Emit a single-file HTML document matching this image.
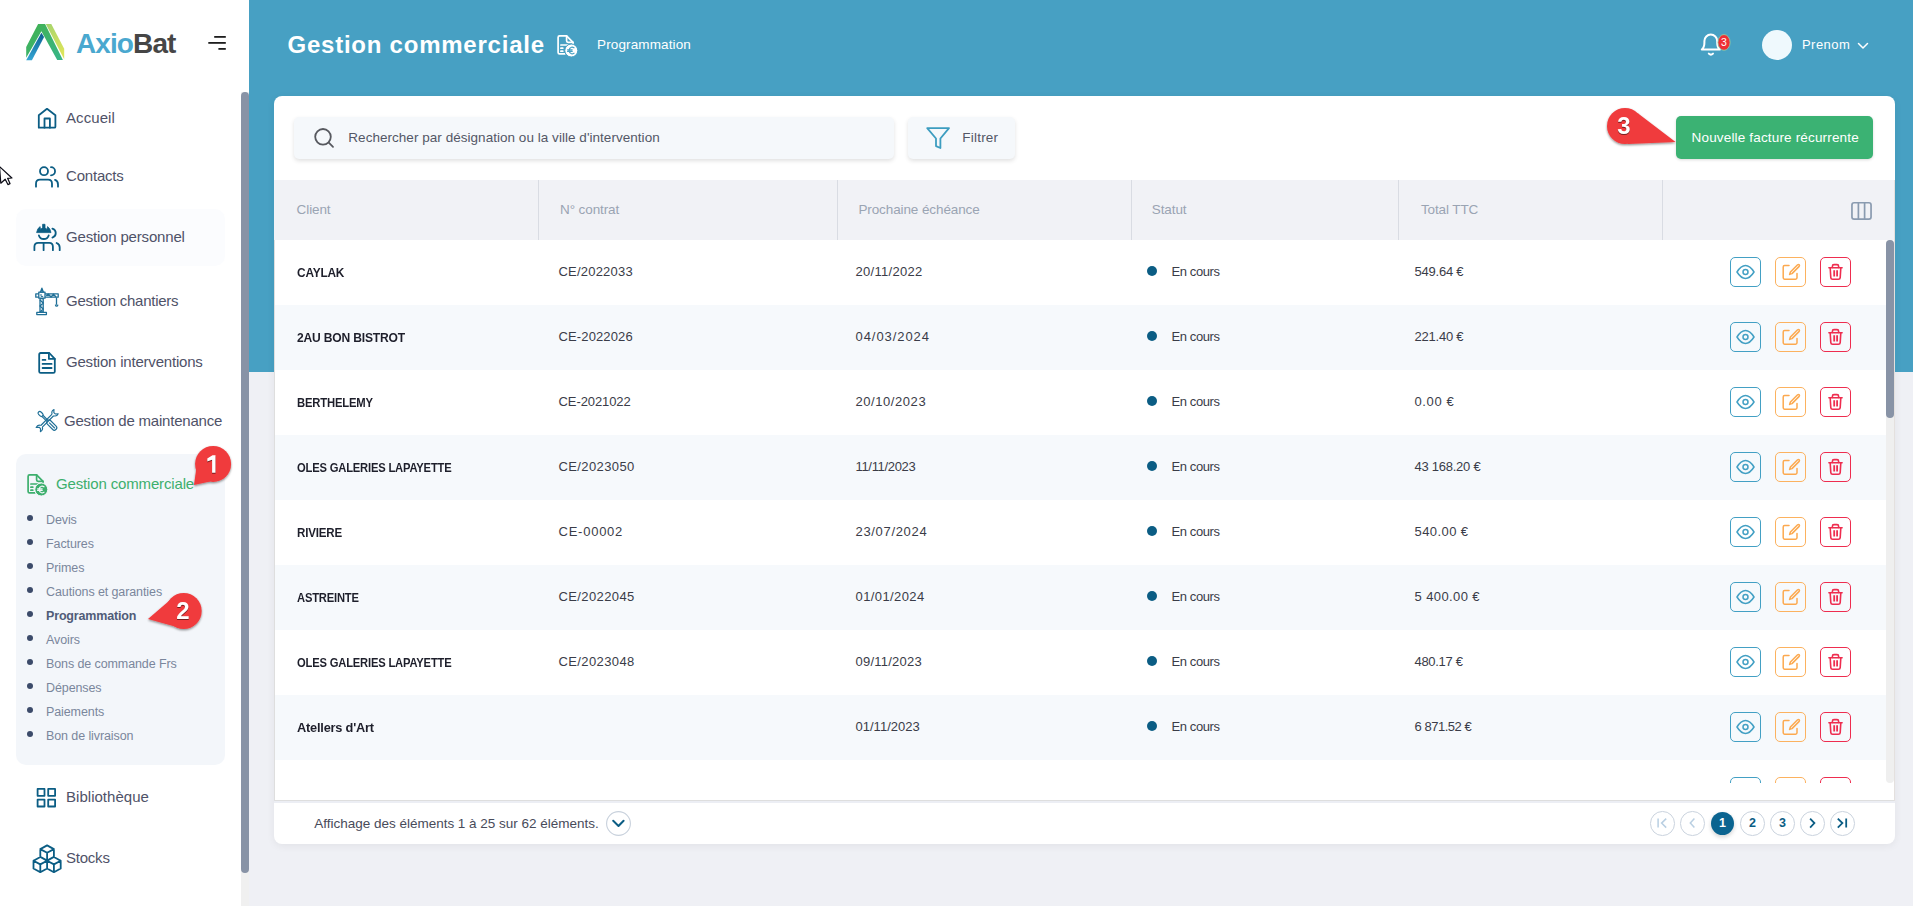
<!DOCTYPE html>
<html><head><meta charset="utf-8">
<style>
*{box-sizing:border-box;margin:0;padding:0}
html,body{width:1913px;height:906px;overflow:hidden;background:#eff0f5;font-family:"Liberation Sans",sans-serif;position:relative}
.abs{position:absolute}
svg{overflow:visible}
#side{position:absolute;left:0;top:0;width:249px;height:906px;background:#fff}
#strack{position:absolute;left:241px;top:92px;width:8px;height:814px;background:#f0f0f0}
#sthumb{position:absolute;left:241px;top:92px;width:8px;height:781px;background:#8893a6;border-radius:4px}
.dot{position:absolute;left:27px;width:6px;height:6px;border-radius:50%;background:#3c4b6a}
#band{position:absolute;left:249px;top:0;width:1664px;height:372px;background:#47a0c3}
#card{position:absolute;left:274px;top:96px;width:1621px;height:748px;background:#fff;border-radius:8px;box-shadow:0 2px 8px rgba(0,0,0,.06)}
.t{position:absolute;white-space:nowrap;line-height:1}
</style></head><body>
<div id="side"><svg class="abs" style="left:20px;top:20px;" width="50" height="45" viewBox="0 0 50 45">
<defs>
<linearGradient id="gb" x1="0" y1="1" x2="0" y2="0"><stop offset="0" stop-color="#35a6d4"/><stop offset="1" stop-color="#0d5f91"/></linearGradient>
<linearGradient id="gy" x1="0" y1="0" x2="0.3" y2="1"><stop offset="0" stop-color="#a6d46e"/><stop offset="1" stop-color="#dbe45a"/></linearGradient>
<linearGradient id="gg" x1="0" y1="0" x2="1" y2="1"><stop offset="0" stop-color="#42b14e"/><stop offset="1" stop-color="#37b58a"/></linearGradient>
</defs>
<polygon points="18.1,4 25.1,4 42.9,40 37.2,40 21.4,11.2 6.2,37.7 6.2,27" fill="url(#gg)"/>
<polygon points="21.4,12.7 24.1,17.1 11.9,40.2 6.2,40.2" fill="url(#gb)"/>
<polygon points="25.8,4 31.3,4 44.2,28.8 44.2,39.2" fill="url(#gy)"/>
</svg>
<div class="t" style="left:76px;top:30.00px;font-size:28px;color:#464646;font-weight:700;letter-spacing:-0.9px;"><span style="color:#4aa8cf">Axio</span><span style="color:#464646">Bat</span></div>
<svg class="abs" style="left:205px;top:30px;" width="25" height="25" viewBox="0 0 25 25"><g stroke="#1e1e1e" stroke-width="1.8"><line x1="9.2" y1="6.9" x2="20.8" y2="6.9"/><line x1="3.3" y1="12.9" x2="20.8" y2="12.9"/><line x1="13.4" y1="18.9" x2="20.8" y2="18.9"/></g></svg>
<div class="abs" style="left:16px;top:209px;width:209px;height:57px;background:#fbfcfe;border-radius:10px"></div><div class="abs" style="left:16px;top:454px;width:209px;height:311px;background:#f3f6fa;border-radius:10px"></div><svg class="abs" style="left:30px;top:100px;" width="35" height="35" viewBox="0 0 35 35"><g fill="none" stroke="#0b5d84" stroke-width="1.8" stroke-linecap="round" stroke-linejoin="round"><path d="M8.8 27.7V15.2L17 8.8L25.4 15.2V26.7Q25.4 27.7 24.4 27.7H9.8Q8.8 27.7 8.8 26.7Z"/><path d="M14.5 27.7V18.5H19.9V27.7"/></g></svg>
<div class="t" style="left:66px;top:110.10px;font-size:15px;color:#4f5268;font-weight:400;letter-spacing:0.073px;">Accueil</div>
<svg class="abs" style="left:30px;top:160px;" width="35" height="35" viewBox="0 0 35 35"><g fill="none" stroke="#0b5d84" stroke-width="1.8" stroke-linecap="round" stroke-linejoin="round"><circle cx="14" cy="11.2" r="4"/><path d="M21 7.2A4 4 0 0 1 21 15.3"/><path d="M6 26.7V23.7Q6 19.7 10 19.7H18Q22 19.7 22 23.7V26.7"/><path d="M25 19.9Q28 20.9 28 24.4V26.7"/></g></svg>
<div class="t" style="left:66px;top:168.10px;font-size:15px;color:#4f5268;font-weight:400;letter-spacing:-0.200px;">Contacts</div>
<svg class="abs" style="left:28px;top:218px;" width="40" height="40" viewBox="0 0 40 40"><g fill="none" stroke="#0b5d84" stroke-width="1.8" stroke-linecap="round" stroke-linejoin="round" stroke-width="2"><path d="M10.9 17.4Q12 21 15.8 21Q19.6 21 20.7 17.4"/><path d="M24.4 10.6A4.7 4.7 0 0 1 24.4 19.6"/><path d="M6.4 32.2V28.7Q6.4 24.9 10.2 24.9H21.3Q24.9 24.9 24.9 28.7V32.2"/><path d="M15.6 25V32.2"/><path d="M28.6 25Q31.7 26.2 31.7 29.5V32.2"/></g>
<path d="M8.6 14.6Q9.3 10.5 12 8.6L12.6 11.6L14.6 9.5V6.3H17V9.5L19 11.6L19.6 8.6Q22.3 10.5 23 14.6Z" fill="#0b5d84" stroke="#0b5d84" stroke-width="0.8" stroke-linejoin="round"/></svg>
<div class="t" style="left:66px;top:229.10px;font-size:15px;color:#4f5268;font-weight:400;letter-spacing:-0.178px;">Gestion personnel</div>
<svg class="abs" style="left:30px;top:283px;" width="35" height="35" viewBox="0 0 35 35"><g fill="none" stroke="#1f6f97" stroke-width="1.3" stroke-linejoin="round">
<rect x="5.8" y="10.8" width="22.4" height="3.4"/>
<path d="M16 12.5L18.5 11.2L21 14L23.5 11.2L26 14"/>
<rect x="8.8" y="9.2" width="6.2" height="6" fill="#fff"/>
<path d="M10.4 9.2L11.9 5.2L13.4 9.2Z"/>
<rect x="10" y="15.6" width="3.2" height="13.4"/>
<path d="M10 17L13.2 20L10 23L13.2 26L10 29"/>
<rect x="6.8" y="29.4" width="9.6" height="2.2"/>
<path d="M26.5 14.4V21.8"/><path d="M25.4 21.6Q25.6 23.2 26.8 23.2Q28 23 27.6 21.6"/>
</g><path d="M11 11V13.4H13.2" fill="none" stroke="#1f6f97" stroke-width="1"/></svg>
<div class="t" style="left:66px;top:293.30px;font-size:15px;color:#4f5268;font-weight:400;letter-spacing:-0.258px;">Gestion chantiers</div>
<svg class="abs" style="left:30px;top:345px;" width="35" height="35" viewBox="0 0 35 35"><g fill="none" stroke="#0b5d84" stroke-width="1.8" stroke-linecap="round" stroke-linejoin="round" stroke-width="1.9"><path d="M10.7 8H19.3L24.8 13.8V26.4Q24.8 27.9 23.3 27.9H10.7Q9.2 27.9 9.2 26.4V9.5Q9.2 8 10.7 8Z"/><path d="M18.9 8V13.9H24.8"/><path d="M12.6 14.9H15.4M12.6 18.9H21.6M12.6 23H21.6"/></g></svg>
<div class="t" style="left:66px;top:354.20px;font-size:15px;color:#4f5268;font-weight:400;letter-spacing:-0.206px;">Gestion interventions</div>
<svg class="abs" style="left:30px;top:403px;" width="35" height="35" viewBox="0 0 35 35"><g fill="none" stroke="#1f6f97" stroke-width="1.15" stroke-linejoin="round">
<g transform="rotate(45 17.2 17.6)">
<rect x="5" y="15.9" width="5.6" height="3.4" rx="1.7"/>
<path d="M10.4 16.8H17.2M10.4 18.4H17.2"/>
<rect x="17.6" y="15.2" width="12" height="4.8" rx="2.2"/>
<path d="M20 17.6H28"/>
</g>
<g transform="rotate(-45 17.2 17.6)">
<path d="M9.2 16.5H25.2M9.2 18.7H25.2"/>
<path d="M9.2 16.5A3.8 3.8 0 0 0 4.6 14.6L6.8 16.6V18.6L4.6 20.6A3.8 3.8 0 0 0 9.2 18.7"/>
<path d="M25.2 16.5A3.8 3.8 0 0 1 29.8 14.6L27.6 16.6V18.6L29.8 20.6A3.8 3.8 0 0 1 25.2 18.7"/>
</g>
</g></svg>
<div class="t" style="left:64px;top:412.80px;font-size:15px;color:#4f5268;font-weight:400;letter-spacing:-0.200px;">Gestion de maintenance</div>
<svg class="abs" style="left:20px;top:468px;" width="35" height="35" viewBox="0 0 35 35"><g fill="none" stroke="#3daf6d" stroke-width="1.7" stroke-linejoin="round" stroke-linecap="round">
<path d="M14.8 24.9H9.6Q8.1 24.9 8.1 23.4V8.4Q8.1 6.9 9.6 6.9H16.6L23 13.3V15.4"/>
<path d="M16.6 6.9V11.8Q16.6 13.3 18.1 13.3H23"/>
<path d="M10.9 16H17.5M10.9 19.2H12.8M10.9 22.2H12.8"/></g>
<circle cx="21.3" cy="21.5" r="6.5" fill="#3daf6d" stroke="#f3f6fa" stroke-width="1"/>
<g fill="none" stroke="#f3f6fa" stroke-width="1.2" stroke-linecap="round"><path d="M24 18.8Q22.6 17.9 21.4 18.3Q19.2 19 19.2 21.5Q19.2 24 21.4 24.7Q22.6 25.1 24 24.2"/><path d="M17.6 20.8H22.2M17.6 22.4H22.2"/></g></svg>
<div class="t" style="left:56px;top:476.00px;font-size:15px;color:#3daf6d;font-weight:400;letter-spacing:-0.149px;">Gestion commerciale</div>
<div class="dot" style="top:515.0px"></div><div class="t" style="left:46px;top:513.82px;font-size:12.5px;color:#7a869c;font-weight:400;letter-spacing:-0.1px;">Devis</div>
<div class="dot" style="top:539.0px"></div><div class="t" style="left:46px;top:537.82px;font-size:12.5px;color:#7a869c;font-weight:400;letter-spacing:-0.1px;">Factures</div>
<div class="dot" style="top:563.0px"></div><div class="t" style="left:46px;top:561.82px;font-size:12.5px;color:#7a869c;font-weight:400;letter-spacing:-0.1px;">Primes</div>
<div class="dot" style="top:587.0px"></div><div class="t" style="left:46px;top:585.82px;font-size:12.5px;color:#7a869c;font-weight:400;letter-spacing:-0.1px;">Cautions et garanties</div>
<div class="dot" style="top:611.0px"></div><div class="t" style="left:46px;top:609.82px;font-size:12.5px;color:#505c78;font-weight:700;letter-spacing:-0.158px;">Programmation</div>
<div class="dot" style="top:635.0px"></div><div class="t" style="left:46px;top:633.82px;font-size:12.5px;color:#7a869c;font-weight:400;letter-spacing:-0.1px;">Avoirs</div>
<div class="dot" style="top:659.0px"></div><div class="t" style="left:46px;top:657.82px;font-size:12.5px;color:#7a869c;font-weight:400;letter-spacing:-0.1px;">Bons de commande Frs</div>
<div class="dot" style="top:683.0px"></div><div class="t" style="left:46px;top:681.82px;font-size:12.5px;color:#7a869c;font-weight:400;letter-spacing:-0.1px;">Dépenses</div>
<div class="dot" style="top:707.0px"></div><div class="t" style="left:46px;top:705.82px;font-size:12.5px;color:#7a869c;font-weight:400;letter-spacing:-0.1px;">Paiements</div>
<div class="dot" style="top:731.0px"></div><div class="t" style="left:46px;top:729.82px;font-size:12.5px;color:#7a869c;font-weight:400;letter-spacing:-0.1px;">Bon de livraison</div>
<svg class="abs" style="left:30px;top:781px;" width="35" height="35" viewBox="0 0 35 35"><g fill="none" stroke="#0b5d84" stroke-width="1.8" stroke-linecap="round" stroke-linejoin="round" stroke-width="1.9" stroke-linecap="butt" stroke-linejoin="miter"><rect x="7.6" y="7.9" width="6.9" height="6.9"/><rect x="18.2" y="7.9" width="6.9" height="6.9"/><rect x="7.6" y="18.6" width="6.9" height="6.9"/><rect x="18.2" y="18.6" width="6.9" height="6.9"/></g></svg>
<div class="t" style="left:66px;top:788.80px;font-size:15px;color:#4f5268;font-weight:400;letter-spacing:0.029px;">Bibliothèque</div>
<svg class="abs" style="left:28px;top:835px;" width="40" height="45" viewBox="0 0 40 45"><path d="M19.1 10.4L25.900000000000002 14.100000000000001V21.900000000000002L19.1 25.6L12.3 21.900000000000002V14.100000000000001Z M12.3 14.100000000000001L19.1 17.8L25.900000000000002 14.100000000000001 M19.1 17.8V25.6 M12.3 22L19.1 25.7V33.5L12.3 37.199999999999996L5.500000000000001 33.5V25.7Z M5.500000000000001 25.7L12.3 29.4L19.1 25.7 M12.3 29.4V37.199999999999996 M25.9 22L32.699999999999996 25.7V33.5L25.9 37.199999999999996L19.099999999999998 33.5V25.7Z M19.099999999999998 25.7L25.9 29.4L32.699999999999996 25.7 M25.9 29.4V37.199999999999996" fill="none" stroke="#0b5d84" stroke-width="1.8" stroke-linecap="round" stroke-linejoin="round" stroke-width="1.8"/></svg>
<div class="t" style="left:66px;top:850.30px;font-size:15px;color:#4f5268;font-weight:400;letter-spacing:-0.223px;">Stocks</div>
</div><div id="strack"></div><div id="sthumb"></div><div id="band"></div><div class="t" style="left:287.5px;top:32.58px;font-size:24px;color:#fff;font-weight:700;letter-spacing:0.764px;">Gestion commerciale</div>
<svg class="abs" style="left:550px;top:29px;" width="35" height="35" viewBox="0 0 35 35"><g fill="none" stroke="#fff" stroke-width="1.7" stroke-linejoin="round" stroke-linecap="round">
<path d="M14.8 24.9H9.6Q8.1 24.9 8.1 23.4V8.4Q8.1 6.9 9.6 6.9H16.6L23 13.3V15.4"/>
<path d="M16.6 6.9V11.8Q16.6 13.3 18.1 13.3H23"/>
<path d="M10.9 16H17.5M10.9 19.2H12.8M10.9 22.2H12.8"/></g>
<circle cx="21.3" cy="21.5" r="6.5" fill="#fff" stroke="#47a0c3" stroke-width="1"/>
<g fill="none" stroke="#47a0c3" stroke-width="1.2" stroke-linecap="round"><path d="M24 18.8Q22.6 17.9 21.4 18.3Q19.2 19 19.2 21.5Q19.2 24 21.4 24.7Q22.6 25.1 24 24.2"/><path d="M17.6 20.8H22.2M17.6 22.4H22.2"/></g></svg>
<div class="t" style="left:597px;top:38.17px;font-size:13.5px;color:#fff;font-weight:400;letter-spacing:0.132px;">Programmation</div>
<svg class="abs" style="left:1692px;top:25px;" width="45" height="37" viewBox="0 0 45 37"><g fill="none" stroke="#fff" stroke-width="2" stroke-linejoin="round" stroke-linecap="round">
<path d="M9.8 24.6Q12.4 22.6 12.4 17.6V16A6.4 6.4 0 0 1 25.2 16V17.6Q25.2 22.6 27.8 24.6Z"/>
<path d="M16.8 28.6Q18.9 30.6 21 28.6"/></g>
<ellipse cx="32" cy="17.4" rx="6.1" ry="7.9" fill="#ee3035" stroke="#8fd6a8" stroke-width="0.8"/>
<text x="32" y="21.2" font-family="Liberation Sans" font-size="10.5" fill="#fff" text-anchor="middle">3</text></svg>
<div class="abs" style="left:1762px;top:30px;width:30px;height:30px;border-radius:50%;background:#eff9fd"></div><div class="t" style="left:1802px;top:38.00px;font-size:13px;color:#fff;font-weight:400;letter-spacing:0.442px;">Prenom</div>
<svg class="abs" style="left:1855px;top:38px;" width="16" height="16" viewBox="0 0 16 16"><path d="M3.5 5.5L8 10L12.5 5.5" fill="none" stroke="#fff" stroke-width="1.5" stroke-linecap="round" stroke-linejoin="round"/></svg>
<div id="card"></div><div class="abs" style="left:294px;top:117px;width:600px;height:42px;background:#f5f8fb;border-radius:5px;box-shadow:0 2px 4px rgba(0,0,0,.12)"></div><svg class="abs" style="left:305px;top:120px;" width="40" height="35" viewBox="0 0 40 35"><g fill="none" stroke="#57595f" stroke-width="1.8" stroke-linecap="round"><circle cx="18" cy="16.8" r="7.8"/><path d="M23.8 22.6L28 26.8"/></g></svg>
<div class="t" style="left:348.3px;top:130.77px;font-size:13.5px;color:#535766;font-weight:400;letter-spacing:0.036px;">Rechercher par désignation ou la ville d'intervention</div>
<div class="abs" style="left:908px;top:117px;width:107px;height:42px;background:#f5f8fb;border-radius:5px;box-shadow:0 2px 4px rgba(0,0,0,.12)"></div><svg class="abs" style="left:915px;top:118px;" width="45" height="40" viewBox="0 0 45 40"><path d="M12.2 10.1H34L25.4 20.5V30L21 28.1V20.5Z" fill="none" stroke="#3d9dc0" stroke-width="1.8" stroke-linejoin="round"/></svg>
<div class="t" style="left:962.3px;top:130.77px;font-size:13.5px;color:#535766;font-weight:400;letter-spacing:0.213px;">Filtrer</div>
<div class="abs" style="left:1676px;top:116px;width:197px;height:43px;background:#3bb273;border-radius:5px;box-shadow:0 1px 3px rgba(0,0,0,.15)"></div><div class="t" style="left:1691.6px;top:131.07px;font-size:13.5px;color:#fff;font-weight:400;letter-spacing:0.163px;">Nouvelle facture récurrente</div>
<div class="abs" style="left:274px;top:180px;width:1621px;height:60px;background:#f1f2f6"></div><div class="abs" style="left:538px;top:180px;width:1px;height:60px;background:#d9dce3"></div><div class="abs" style="left:836.5px;top:180px;width:1px;height:60px;background:#d9dce3"></div><div class="abs" style="left:1130.5px;top:180px;width:1px;height:60px;background:#d9dce3"></div><div class="abs" style="left:1398px;top:180px;width:1px;height:60px;background:#d9dce3"></div><div class="abs" style="left:1662px;top:180px;width:1px;height:60px;background:#d9dce3"></div><div class="t" style="left:296.6px;top:202.67px;font-size:13.5px;color:#9aa4b3;font-weight:400;letter-spacing:-0.1px;">Client</div>
<div class="t" style="left:560px;top:202.67px;font-size:13.5px;color:#9aa4b3;font-weight:400;letter-spacing:-0.1px;">N° contrat</div>
<div class="t" style="left:858.4px;top:202.67px;font-size:13.5px;color:#9aa4b3;font-weight:400;letter-spacing:-0.1px;">Prochaine échéance</div>
<div class="t" style="left:1151.8px;top:202.67px;font-size:13.5px;color:#9aa4b3;font-weight:400;letter-spacing:-0.1px;">Statut</div>
<div class="t" style="left:1420.9px;top:202.67px;font-size:13.5px;color:#9aa4b3;font-weight:400;letter-spacing:-0.1px;">Total TTC</div>
<svg class="abs" style="left:1840px;top:195px;" width="45" height="33" viewBox="0 0 45 33"><g fill="none" stroke="#8a9bb0" stroke-width="1.7"><rect x="11.95" y="7.75" width="19.1" height="16.4" rx="2.2"/><path d="M18.4 7.75V24.15M24.6 7.75V24.15"/></g></svg>
<div class="abs" style="left:274px;top:240px;width:1620px;height:543px;overflow:hidden"><div class="abs" style="left:0;top:0px;width:1620px;height:65px;background:#fff"><div class="t" style="left:23px;top:27.42px;font-size:12.5px;color:#1e1f2b;font-weight:700;letter-spacing:-0.2px;transform:scaleX(0.9492);transform-origin:0 0;">CAYLAK</div>
<div class="t" style="left:284.5px;top:25.30px;font-size:13px;color:#3a3c48;font-weight:400;letter-spacing:0.207px;">CE/2022033</div>
<div class="t" style="left:581.5px;top:25.40px;font-size:13px;color:#3a3c48;font-weight:400;letter-spacing:0.292px;">20/11/2022</div>
<div class="abs" style="left:873px;top:26.3px;width:10px;height:10px;border-radius:50%;background:#0b5d84"></div><div class="t" style="left:897.5px;top:25.30px;font-size:13px;color:#3a3c48;font-weight:400;letter-spacing:-0.4px;">En cours</div>
<div class="t" style="left:1140.5px;top:25.30px;font-size:13px;color:#3a3c48;font-weight:400;letter-spacing:-0.224px;">549.64 €</div>
<div class="abs" style="left:1456px;top:17px;width:31px;height:30px;border:1px solid #43a0c4;border-radius:5px;overflow:hidden"><div class="abs" style="left:-1px;top:-1px"><svg width="31" height="30" viewBox="0 0 31 30"><g fill="none" stroke="#43a0c4" stroke-width="1.5"><path d="M7 15Q11 8.6 15.5 8.6Q20 8.6 24 15Q20 21.4 15.5 21.4Q11 21.4 7 15Z"/><circle cx="15.5" cy="15" r="2.5"/></g></svg></div></div><div class="abs" style="left:1501px;top:17px;width:31px;height:30px;border:1px solid #fcb25f;border-radius:5px;overflow:hidden"><div class="abs" style="left:-1px;top:-1px"><svg width="31" height="30" viewBox="0 0 31 30"><g fill="none" stroke="#fca94f" stroke-width="1.5" stroke-linejoin="round" stroke-linecap="round"><path d="M14 8.6H9.6Q8.2 8.6 8.2 10V20.8Q8.2 22.2 9.6 22.2H20.6Q22 22.2 22 20.8V16.6"/><path d="M22.6 7.8Q23.6 7.2 24.2 7.8Q24.8 8.6 24.2 9.4L17 16.6L14.6 17.4L15.4 15Z"/></g></svg></div></div><div class="abs" style="left:1546px;top:17px;width:31px;height:30px;border:1px solid #ee2d4f;border-radius:5px;overflow:hidden"><div class="abs" style="left:-1px;top:-1px"><svg width="31" height="30" viewBox="0 0 31 30"><g fill="none" stroke="#ee2d4f" stroke-width="1.6" stroke-linejoin="round" stroke-linecap="round"><path d="M8.9 10.7H22.1"/><path d="M12.4 10.5V9.2Q12.4 7.6 14 7.6H17Q18.6 7.6 18.6 9.2V10.5"/><path d="M10.2 11L10.8 20.6Q10.9 22.3 12.6 22.3H18.4Q20.1 22.3 20.2 20.6L20.8 11"/></g><path d="M14.2 13.2V19.4M17.1 13.2V19.4" stroke="#ee2d4f" stroke-width="1.8"/></svg></div></div></div><div class="abs" style="left:0;top:65px;width:1620px;height:65px;background:#f6f9fc"><div class="t" style="left:23px;top:27.42px;font-size:12.5px;color:#1e1f2b;font-weight:700;letter-spacing:-0.2px;transform:scaleX(0.9670);transform-origin:0 0;">2AU BON BISTROT</div>
<div class="t" style="left:284.5px;top:25.30px;font-size:13px;color:#3a3c48;font-weight:400;letter-spacing:0.127px;">CE-2022026</div>
<div class="t" style="left:581.5px;top:25.40px;font-size:13px;color:#3a3c48;font-weight:400;letter-spacing:0.940px;">04/03/2024</div>
<div class="abs" style="left:873px;top:26.3px;width:10px;height:10px;border-radius:50%;background:#0b5d84"></div><div class="t" style="left:897.5px;top:25.30px;font-size:13px;color:#3a3c48;font-weight:400;letter-spacing:-0.4px;">En cours</div>
<div class="t" style="left:1140.5px;top:25.30px;font-size:13px;color:#3a3c48;font-weight:400;letter-spacing:-0.224px;">221.40 €</div>
<div class="abs" style="left:1456px;top:17px;width:31px;height:30px;border:1px solid #43a0c4;border-radius:5px;overflow:hidden"><div class="abs" style="left:-1px;top:-1px"><svg width="31" height="30" viewBox="0 0 31 30"><g fill="none" stroke="#43a0c4" stroke-width="1.5"><path d="M7 15Q11 8.6 15.5 8.6Q20 8.6 24 15Q20 21.4 15.5 21.4Q11 21.4 7 15Z"/><circle cx="15.5" cy="15" r="2.5"/></g></svg></div></div><div class="abs" style="left:1501px;top:17px;width:31px;height:30px;border:1px solid #fcb25f;border-radius:5px;overflow:hidden"><div class="abs" style="left:-1px;top:-1px"><svg width="31" height="30" viewBox="0 0 31 30"><g fill="none" stroke="#fca94f" stroke-width="1.5" stroke-linejoin="round" stroke-linecap="round"><path d="M14 8.6H9.6Q8.2 8.6 8.2 10V20.8Q8.2 22.2 9.6 22.2H20.6Q22 22.2 22 20.8V16.6"/><path d="M22.6 7.8Q23.6 7.2 24.2 7.8Q24.8 8.6 24.2 9.4L17 16.6L14.6 17.4L15.4 15Z"/></g></svg></div></div><div class="abs" style="left:1546px;top:17px;width:31px;height:30px;border:1px solid #ee2d4f;border-radius:5px;overflow:hidden"><div class="abs" style="left:-1px;top:-1px"><svg width="31" height="30" viewBox="0 0 31 30"><g fill="none" stroke="#ee2d4f" stroke-width="1.6" stroke-linejoin="round" stroke-linecap="round"><path d="M8.9 10.7H22.1"/><path d="M12.4 10.5V9.2Q12.4 7.6 14 7.6H17Q18.6 7.6 18.6 9.2V10.5"/><path d="M10.2 11L10.8 20.6Q10.9 22.3 12.6 22.3H18.4Q20.1 22.3 20.2 20.6L20.8 11"/></g><path d="M14.2 13.2V19.4M17.1 13.2V19.4" stroke="#ee2d4f" stroke-width="1.8"/></svg></div></div></div><div class="abs" style="left:0;top:130px;width:1620px;height:65px;background:#fff"><div class="t" style="left:23px;top:27.42px;font-size:12.5px;color:#1e1f2b;font-weight:700;letter-spacing:-0.2px;transform:scaleX(0.9013);transform-origin:0 0;">BERTHELEMY</div>
<div class="t" style="left:284.5px;top:25.30px;font-size:13px;color:#3a3c48;font-weight:400;letter-spacing:-0.084px;">CE-2021022</div>
<div class="t" style="left:581.5px;top:25.40px;font-size:13px;color:#3a3c48;font-weight:400;letter-spacing:0.562px;">20/10/2023</div>
<div class="abs" style="left:873px;top:26.3px;width:10px;height:10px;border-radius:50%;background:#0b5d84"></div><div class="t" style="left:897.5px;top:25.30px;font-size:13px;color:#3a3c48;font-weight:400;letter-spacing:-0.4px;">En cours</div>
<div class="t" style="left:1140.5px;top:25.30px;font-size:13px;color:#3a3c48;font-weight:400;letter-spacing:0.617px;">0.00 €</div>
<div class="abs" style="left:1456px;top:17px;width:31px;height:30px;border:1px solid #43a0c4;border-radius:5px;overflow:hidden"><div class="abs" style="left:-1px;top:-1px"><svg width="31" height="30" viewBox="0 0 31 30"><g fill="none" stroke="#43a0c4" stroke-width="1.5"><path d="M7 15Q11 8.6 15.5 8.6Q20 8.6 24 15Q20 21.4 15.5 21.4Q11 21.4 7 15Z"/><circle cx="15.5" cy="15" r="2.5"/></g></svg></div></div><div class="abs" style="left:1501px;top:17px;width:31px;height:30px;border:1px solid #fcb25f;border-radius:5px;overflow:hidden"><div class="abs" style="left:-1px;top:-1px"><svg width="31" height="30" viewBox="0 0 31 30"><g fill="none" stroke="#fca94f" stroke-width="1.5" stroke-linejoin="round" stroke-linecap="round"><path d="M14 8.6H9.6Q8.2 8.6 8.2 10V20.8Q8.2 22.2 9.6 22.2H20.6Q22 22.2 22 20.8V16.6"/><path d="M22.6 7.8Q23.6 7.2 24.2 7.8Q24.8 8.6 24.2 9.4L17 16.6L14.6 17.4L15.4 15Z"/></g></svg></div></div><div class="abs" style="left:1546px;top:17px;width:31px;height:30px;border:1px solid #ee2d4f;border-radius:5px;overflow:hidden"><div class="abs" style="left:-1px;top:-1px"><svg width="31" height="30" viewBox="0 0 31 30"><g fill="none" stroke="#ee2d4f" stroke-width="1.6" stroke-linejoin="round" stroke-linecap="round"><path d="M8.9 10.7H22.1"/><path d="M12.4 10.5V9.2Q12.4 7.6 14 7.6H17Q18.6 7.6 18.6 9.2V10.5"/><path d="M10.2 11L10.8 20.6Q10.9 22.3 12.6 22.3H18.4Q20.1 22.3 20.2 20.6L20.8 11"/></g><path d="M14.2 13.2V19.4M17.1 13.2V19.4" stroke="#ee2d4f" stroke-width="1.8"/></svg></div></div></div><div class="abs" style="left:0;top:195px;width:1620px;height:65px;background:#f6f9fc"><div class="t" style="left:23px;top:27.42px;font-size:12.5px;color:#1e1f2b;font-weight:700;letter-spacing:-0.2px;transform:scaleX(0.8957);transform-origin:0 0;">OLES GALERIES LAPAYETTE</div>
<div class="t" style="left:284.5px;top:25.30px;font-size:13px;color:#3a3c48;font-weight:400;letter-spacing:0.384px;">CE/2023050</div>
<div class="t" style="left:581.5px;top:25.40px;font-size:13px;color:#3a3c48;font-weight:400;letter-spacing:-0.322px;">11/11/2023</div>
<div class="abs" style="left:873px;top:26.3px;width:10px;height:10px;border-radius:50%;background:#0b5d84"></div><div class="t" style="left:897.5px;top:25.30px;font-size:13px;color:#3a3c48;font-weight:400;letter-spacing:-0.4px;">En cours</div>
<div class="t" style="left:1140.5px;top:25.30px;font-size:13px;color:#3a3c48;font-weight:400;letter-spacing:-0.255px;">43 168.20 €</div>
<div class="abs" style="left:1456px;top:17px;width:31px;height:30px;border:1px solid #43a0c4;border-radius:5px;overflow:hidden"><div class="abs" style="left:-1px;top:-1px"><svg width="31" height="30" viewBox="0 0 31 30"><g fill="none" stroke="#43a0c4" stroke-width="1.5"><path d="M7 15Q11 8.6 15.5 8.6Q20 8.6 24 15Q20 21.4 15.5 21.4Q11 21.4 7 15Z"/><circle cx="15.5" cy="15" r="2.5"/></g></svg></div></div><div class="abs" style="left:1501px;top:17px;width:31px;height:30px;border:1px solid #fcb25f;border-radius:5px;overflow:hidden"><div class="abs" style="left:-1px;top:-1px"><svg width="31" height="30" viewBox="0 0 31 30"><g fill="none" stroke="#fca94f" stroke-width="1.5" stroke-linejoin="round" stroke-linecap="round"><path d="M14 8.6H9.6Q8.2 8.6 8.2 10V20.8Q8.2 22.2 9.6 22.2H20.6Q22 22.2 22 20.8V16.6"/><path d="M22.6 7.8Q23.6 7.2 24.2 7.8Q24.8 8.6 24.2 9.4L17 16.6L14.6 17.4L15.4 15Z"/></g></svg></div></div><div class="abs" style="left:1546px;top:17px;width:31px;height:30px;border:1px solid #ee2d4f;border-radius:5px;overflow:hidden"><div class="abs" style="left:-1px;top:-1px"><svg width="31" height="30" viewBox="0 0 31 30"><g fill="none" stroke="#ee2d4f" stroke-width="1.6" stroke-linejoin="round" stroke-linecap="round"><path d="M8.9 10.7H22.1"/><path d="M12.4 10.5V9.2Q12.4 7.6 14 7.6H17Q18.6 7.6 18.6 9.2V10.5"/><path d="M10.2 11L10.8 20.6Q10.9 22.3 12.6 22.3H18.4Q20.1 22.3 20.2 20.6L20.8 11"/></g><path d="M14.2 13.2V19.4M17.1 13.2V19.4" stroke="#ee2d4f" stroke-width="1.8"/></svg></div></div></div><div class="abs" style="left:0;top:260px;width:1620px;height:65px;background:#fff"><div class="t" style="left:23px;top:27.42px;font-size:12.5px;color:#1e1f2b;font-weight:700;letter-spacing:-0.2px;transform:scaleX(0.9237);transform-origin:0 0;">RIVIERE</div>
<div class="t" style="left:284.5px;top:25.30px;font-size:13px;color:#3a3c48;font-weight:400;letter-spacing:0.756px;">CE-00002</div>
<div class="t" style="left:581.5px;top:25.40px;font-size:13px;color:#3a3c48;font-weight:400;letter-spacing:0.674px;">23/07/2024</div>
<div class="abs" style="left:873px;top:26.3px;width:10px;height:10px;border-radius:50%;background:#0b5d84"></div><div class="t" style="left:897.5px;top:25.30px;font-size:13px;color:#3a3c48;font-weight:400;letter-spacing:-0.4px;">En cours</div>
<div class="t" style="left:1140.5px;top:25.30px;font-size:13px;color:#3a3c48;font-weight:400;letter-spacing:0.419px;">540.00 €</div>
<div class="abs" style="left:1456px;top:17px;width:31px;height:30px;border:1px solid #43a0c4;border-radius:5px;overflow:hidden"><div class="abs" style="left:-1px;top:-1px"><svg width="31" height="30" viewBox="0 0 31 30"><g fill="none" stroke="#43a0c4" stroke-width="1.5"><path d="M7 15Q11 8.6 15.5 8.6Q20 8.6 24 15Q20 21.4 15.5 21.4Q11 21.4 7 15Z"/><circle cx="15.5" cy="15" r="2.5"/></g></svg></div></div><div class="abs" style="left:1501px;top:17px;width:31px;height:30px;border:1px solid #fcb25f;border-radius:5px;overflow:hidden"><div class="abs" style="left:-1px;top:-1px"><svg width="31" height="30" viewBox="0 0 31 30"><g fill="none" stroke="#fca94f" stroke-width="1.5" stroke-linejoin="round" stroke-linecap="round"><path d="M14 8.6H9.6Q8.2 8.6 8.2 10V20.8Q8.2 22.2 9.6 22.2H20.6Q22 22.2 22 20.8V16.6"/><path d="M22.6 7.8Q23.6 7.2 24.2 7.8Q24.8 8.6 24.2 9.4L17 16.6L14.6 17.4L15.4 15Z"/></g></svg></div></div><div class="abs" style="left:1546px;top:17px;width:31px;height:30px;border:1px solid #ee2d4f;border-radius:5px;overflow:hidden"><div class="abs" style="left:-1px;top:-1px"><svg width="31" height="30" viewBox="0 0 31 30"><g fill="none" stroke="#ee2d4f" stroke-width="1.6" stroke-linejoin="round" stroke-linecap="round"><path d="M8.9 10.7H22.1"/><path d="M12.4 10.5V9.2Q12.4 7.6 14 7.6H17Q18.6 7.6 18.6 9.2V10.5"/><path d="M10.2 11L10.8 20.6Q10.9 22.3 12.6 22.3H18.4Q20.1 22.3 20.2 20.6L20.8 11"/></g><path d="M14.2 13.2V19.4M17.1 13.2V19.4" stroke="#ee2d4f" stroke-width="1.8"/></svg></div></div></div><div class="abs" style="left:0;top:325px;width:1620px;height:65px;background:#f6f9fc"><div class="t" style="left:23px;top:27.42px;font-size:12.5px;color:#1e1f2b;font-weight:700;letter-spacing:-0.2px;transform:scaleX(0.8953);transform-origin:0 0;">ASTREINTE</div>
<div class="t" style="left:284.5px;top:25.30px;font-size:13px;color:#3a3c48;font-weight:400;letter-spacing:0.384px;">CE/2022045</div>
<div class="t" style="left:581.5px;top:25.40px;font-size:13px;color:#3a3c48;font-weight:400;letter-spacing:0.396px;">01/01/2024</div>
<div class="abs" style="left:873px;top:26.3px;width:10px;height:10px;border-radius:50%;background:#0b5d84"></div><div class="t" style="left:897.5px;top:25.30px;font-size:13px;color:#3a3c48;font-weight:400;letter-spacing:-0.4px;">En cours</div>
<div class="t" style="left:1140.5px;top:25.30px;font-size:13px;color:#3a3c48;font-weight:400;letter-spacing:0.399px;">5 400.00 €</div>
<div class="abs" style="left:1456px;top:17px;width:31px;height:30px;border:1px solid #43a0c4;border-radius:5px;overflow:hidden"><div class="abs" style="left:-1px;top:-1px"><svg width="31" height="30" viewBox="0 0 31 30"><g fill="none" stroke="#43a0c4" stroke-width="1.5"><path d="M7 15Q11 8.6 15.5 8.6Q20 8.6 24 15Q20 21.4 15.5 21.4Q11 21.4 7 15Z"/><circle cx="15.5" cy="15" r="2.5"/></g></svg></div></div><div class="abs" style="left:1501px;top:17px;width:31px;height:30px;border:1px solid #fcb25f;border-radius:5px;overflow:hidden"><div class="abs" style="left:-1px;top:-1px"><svg width="31" height="30" viewBox="0 0 31 30"><g fill="none" stroke="#fca94f" stroke-width="1.5" stroke-linejoin="round" stroke-linecap="round"><path d="M14 8.6H9.6Q8.2 8.6 8.2 10V20.8Q8.2 22.2 9.6 22.2H20.6Q22 22.2 22 20.8V16.6"/><path d="M22.6 7.8Q23.6 7.2 24.2 7.8Q24.8 8.6 24.2 9.4L17 16.6L14.6 17.4L15.4 15Z"/></g></svg></div></div><div class="abs" style="left:1546px;top:17px;width:31px;height:30px;border:1px solid #ee2d4f;border-radius:5px;overflow:hidden"><div class="abs" style="left:-1px;top:-1px"><svg width="31" height="30" viewBox="0 0 31 30"><g fill="none" stroke="#ee2d4f" stroke-width="1.6" stroke-linejoin="round" stroke-linecap="round"><path d="M8.9 10.7H22.1"/><path d="M12.4 10.5V9.2Q12.4 7.6 14 7.6H17Q18.6 7.6 18.6 9.2V10.5"/><path d="M10.2 11L10.8 20.6Q10.9 22.3 12.6 22.3H18.4Q20.1 22.3 20.2 20.6L20.8 11"/></g><path d="M14.2 13.2V19.4M17.1 13.2V19.4" stroke="#ee2d4f" stroke-width="1.8"/></svg></div></div></div><div class="abs" style="left:0;top:390px;width:1620px;height:65px;background:#fff"><div class="t" style="left:23px;top:27.42px;font-size:12.5px;color:#1e1f2b;font-weight:700;letter-spacing:-0.2px;transform:scaleX(0.8957);transform-origin:0 0;">OLES GALERIES LAPAYETTE</div>
<div class="t" style="left:284.5px;top:25.30px;font-size:13px;color:#3a3c48;font-weight:400;letter-spacing:0.384px;">CE/2023048</div>
<div class="t" style="left:581.5px;top:25.40px;font-size:13px;color:#3a3c48;font-weight:400;letter-spacing:0.237px;">09/11/2023</div>
<div class="abs" style="left:873px;top:26.3px;width:10px;height:10px;border-radius:50%;background:#0b5d84"></div><div class="t" style="left:897.5px;top:25.30px;font-size:13px;color:#3a3c48;font-weight:400;letter-spacing:-0.4px;">En cours</div>
<div class="t" style="left:1140.5px;top:25.30px;font-size:13px;color:#3a3c48;font-weight:400;letter-spacing:-0.296px;">480.17 €</div>
<div class="abs" style="left:1456px;top:17px;width:31px;height:30px;border:1px solid #43a0c4;border-radius:5px;overflow:hidden"><div class="abs" style="left:-1px;top:-1px"><svg width="31" height="30" viewBox="0 0 31 30"><g fill="none" stroke="#43a0c4" stroke-width="1.5"><path d="M7 15Q11 8.6 15.5 8.6Q20 8.6 24 15Q20 21.4 15.5 21.4Q11 21.4 7 15Z"/><circle cx="15.5" cy="15" r="2.5"/></g></svg></div></div><div class="abs" style="left:1501px;top:17px;width:31px;height:30px;border:1px solid #fcb25f;border-radius:5px;overflow:hidden"><div class="abs" style="left:-1px;top:-1px"><svg width="31" height="30" viewBox="0 0 31 30"><g fill="none" stroke="#fca94f" stroke-width="1.5" stroke-linejoin="round" stroke-linecap="round"><path d="M14 8.6H9.6Q8.2 8.6 8.2 10V20.8Q8.2 22.2 9.6 22.2H20.6Q22 22.2 22 20.8V16.6"/><path d="M22.6 7.8Q23.6 7.2 24.2 7.8Q24.8 8.6 24.2 9.4L17 16.6L14.6 17.4L15.4 15Z"/></g></svg></div></div><div class="abs" style="left:1546px;top:17px;width:31px;height:30px;border:1px solid #ee2d4f;border-radius:5px;overflow:hidden"><div class="abs" style="left:-1px;top:-1px"><svg width="31" height="30" viewBox="0 0 31 30"><g fill="none" stroke="#ee2d4f" stroke-width="1.6" stroke-linejoin="round" stroke-linecap="round"><path d="M8.9 10.7H22.1"/><path d="M12.4 10.5V9.2Q12.4 7.6 14 7.6H17Q18.6 7.6 18.6 9.2V10.5"/><path d="M10.2 11L10.8 20.6Q10.9 22.3 12.6 22.3H18.4Q20.1 22.3 20.2 20.6L20.8 11"/></g><path d="M14.2 13.2V19.4M17.1 13.2V19.4" stroke="#ee2d4f" stroke-width="1.8"/></svg></div></div></div><div class="abs" style="left:0;top:455px;width:1620px;height:65px;background:#f6f9fc"><div class="t" style="left:23px;top:27.42px;font-size:12.5px;color:#1e1f2b;font-weight:700;letter-spacing:-0.2px;transform:scaleX(1.0212);transform-origin:0 0;">Atellers d'Art</div>
<div class="t" style="left:581.5px;top:25.40px;font-size:13px;color:#3a3c48;font-weight:400;letter-spacing:0.015px;">01/11/2023</div>
<div class="abs" style="left:873px;top:26.3px;width:10px;height:10px;border-radius:50%;background:#0b5d84"></div><div class="t" style="left:897.5px;top:25.30px;font-size:13px;color:#3a3c48;font-weight:400;letter-spacing:-0.4px;">En cours</div>
<div class="t" style="left:1140.5px;top:25.30px;font-size:13px;color:#3a3c48;font-weight:400;letter-spacing:-0.479px;">6 871.52 €</div>
<div class="abs" style="left:1456px;top:17px;width:31px;height:30px;border:1px solid #43a0c4;border-radius:5px;overflow:hidden"><div class="abs" style="left:-1px;top:-1px"><svg width="31" height="30" viewBox="0 0 31 30"><g fill="none" stroke="#43a0c4" stroke-width="1.5"><path d="M7 15Q11 8.6 15.5 8.6Q20 8.6 24 15Q20 21.4 15.5 21.4Q11 21.4 7 15Z"/><circle cx="15.5" cy="15" r="2.5"/></g></svg></div></div><div class="abs" style="left:1501px;top:17px;width:31px;height:30px;border:1px solid #fcb25f;border-radius:5px;overflow:hidden"><div class="abs" style="left:-1px;top:-1px"><svg width="31" height="30" viewBox="0 0 31 30"><g fill="none" stroke="#fca94f" stroke-width="1.5" stroke-linejoin="round" stroke-linecap="round"><path d="M14 8.6H9.6Q8.2 8.6 8.2 10V20.8Q8.2 22.2 9.6 22.2H20.6Q22 22.2 22 20.8V16.6"/><path d="M22.6 7.8Q23.6 7.2 24.2 7.8Q24.8 8.6 24.2 9.4L17 16.6L14.6 17.4L15.4 15Z"/></g></svg></div></div><div class="abs" style="left:1546px;top:17px;width:31px;height:30px;border:1px solid #ee2d4f;border-radius:5px;overflow:hidden"><div class="abs" style="left:-1px;top:-1px"><svg width="31" height="30" viewBox="0 0 31 30"><g fill="none" stroke="#ee2d4f" stroke-width="1.6" stroke-linejoin="round" stroke-linecap="round"><path d="M8.9 10.7H22.1"/><path d="M12.4 10.5V9.2Q12.4 7.6 14 7.6H17Q18.6 7.6 18.6 9.2V10.5"/><path d="M10.2 11L10.8 20.6Q10.9 22.3 12.6 22.3H18.4Q20.1 22.3 20.2 20.6L20.8 11"/></g><path d="M14.2 13.2V19.4M17.1 13.2V19.4" stroke="#ee2d4f" stroke-width="1.8"/></svg></div></div></div><div class="abs" style="left:0;top:520px;width:1620px;height:65px;background:#fff"><div class="abs" style="left:1456px;top:17px;width:31px;height:30px;border:1px solid #43a0c4;border-radius:5px;overflow:hidden"><div class="abs" style="left:-1px;top:-1px"><svg width="31" height="30" viewBox="0 0 31 30"><g fill="none" stroke="#43a0c4" stroke-width="1.5"><path d="M7 15Q11 8.6 15.5 8.6Q20 8.6 24 15Q20 21.4 15.5 21.4Q11 21.4 7 15Z"/><circle cx="15.5" cy="15" r="2.5"/></g></svg></div></div><div class="abs" style="left:1501px;top:17px;width:31px;height:30px;border:1px solid #fcb25f;border-radius:5px;overflow:hidden"><div class="abs" style="left:-1px;top:-1px"><svg width="31" height="30" viewBox="0 0 31 30"><g fill="none" stroke="#fca94f" stroke-width="1.5" stroke-linejoin="round" stroke-linecap="round"><path d="M14 8.6H9.6Q8.2 8.6 8.2 10V20.8Q8.2 22.2 9.6 22.2H20.6Q22 22.2 22 20.8V16.6"/><path d="M22.6 7.8Q23.6 7.2 24.2 7.8Q24.8 8.6 24.2 9.4L17 16.6L14.6 17.4L15.4 15Z"/></g></svg></div></div><div class="abs" style="left:1546px;top:17px;width:31px;height:30px;border:1px solid #ee2d4f;border-radius:5px;overflow:hidden"><div class="abs" style="left:-1px;top:-1px"><svg width="31" height="30" viewBox="0 0 31 30"><g fill="none" stroke="#ee2d4f" stroke-width="1.6" stroke-linejoin="round" stroke-linecap="round"><path d="M8.9 10.7H22.1"/><path d="M12.4 10.5V9.2Q12.4 7.6 14 7.6H17Q18.6 7.6 18.6 9.2V10.5"/><path d="M10.2 11L10.8 20.6Q10.9 22.3 12.6 22.3H18.4Q20.1 22.3 20.2 20.6L20.8 11"/></g><path d="M14.2 13.2V19.4M17.1 13.2V19.4" stroke="#ee2d4f" stroke-width="1.8"/></svg></div></div></div><div class="abs" style="left:1612px;top:0;width:8px;height:543px;background:#efefef;border-radius:4px"></div><div class="abs" style="left:1612px;top:0;width:8px;height:178px;background:#8893a6;border-radius:4px"></div></div><div class="abs" style="left:274px;top:240px;width:1621px;height:561px;border:1px solid #dedede;border-top:none;border-right:none;pointer-events:none"></div><div class="abs" style="left:1893.5px;top:180px;width:1.5px;height:621px;background:#e4e0de"></div><div class="abs" style="left:274px;top:801px;width:1621px;height:2px;background:#eceef4"></div><div class="t" style="left:314.3px;top:816.97px;font-size:13.5px;color:#484b5a;font-weight:400;letter-spacing:-0.012px;">Affichage des éléments 1 à 25 sur 62 éléments.</div>
<svg class="abs" style="left:606px;top:811px;" width="25" height="25" viewBox="0 0 25 25"><circle cx="12.5" cy="12.5" r="11.9" fill="#fff" stroke="#c8d1dc" stroke-width="1.1"/><path d="M7.2 9.8L12.5 15L17.6 9.8" fill="none" stroke="#0b5d84" stroke-width="2" stroke-linecap="round" stroke-linejoin="round"/></svg>
<div class="abs" style="left:1650.2px;top:811px;width:24.6px;height:24.6px;border-radius:50%;border:1px solid #cad3de;background:#fff"></div><svg class="abs" style="left:1650.2px;top:811px;" width="25" height="25" viewBox="0 0 25 25"><path d="M8.1 7.6V16.6M16.2 7.6L11.6 12.1L16.2 16.6" fill="none" stroke="#b9cfe2" stroke-width="1.5" stroke-linecap="butt" stroke-linejoin="miter"/></svg>
<div class="abs" style="left:1680.0px;top:811px;width:24.6px;height:24.6px;border-radius:50%;border:1px solid #cad3de;background:#fff"></div><svg class="abs" style="left:1680.0px;top:811px;" width="25" height="25" viewBox="0 0 25 25"><path d="M14.4 7.6L10.3 12.1L14.4 16.6" fill="none" stroke="#b9cfe2" stroke-width="1.5" stroke-linecap="butt" stroke-linejoin="miter"/></svg>
<div class="abs" style="left:1710.9px;top:811.8px;width:23.2px;height:23.2px;border-radius:50%;background:#0b6490;box-shadow:0 2px 4px rgba(0,0,0,.18)"></div><div class="t" style="left:1710.2px;top:817.3px;width:24.6px;text-align:center;font-size:12.5px;font-weight:700;color:#fff">1</div><div class="abs" style="left:1740.1px;top:811px;width:24.6px;height:24.6px;border-radius:50%;border:1px solid #cad3de;background:#fff"></div><div class="t" style="left:1740.1px;top:817.3px;width:24.6px;text-align:center;font-size:12.5px;font-weight:700;color:#0b5d84">2</div><div class="abs" style="left:1770.1px;top:811px;width:24.6px;height:24.6px;border-radius:50%;border:1px solid #cad3de;background:#fff"></div><div class="t" style="left:1770.1px;top:817.3px;width:24.6px;text-align:center;font-size:12.5px;font-weight:700;color:#0b5d84">3</div><div class="abs" style="left:1800.1px;top:811px;width:24.6px;height:24.6px;border-radius:50%;border:1px solid #cad3de;background:#fff"></div><svg class="abs" style="left:1800.1px;top:811px;" width="25" height="25" viewBox="0 0 25 25"><path d="M10.1 7.6L14.4 12.1L10.1 16.6" fill="none" stroke="#0b5d84" stroke-width="1.8" stroke-linecap="butt" stroke-linejoin="miter"/></svg>
<div class="abs" style="left:1830.1px;top:811px;width:24.6px;height:24.6px;border-radius:50%;border:1px solid #cad3de;background:#fff"></div><svg class="abs" style="left:1830.1px;top:811px;" width="25" height="25" viewBox="0 0 25 25"><path d="M7.8 7.6L12.4 12.1L7.8 16.6M16.2 7.6V16.6" fill="none" stroke="#0b5d84" stroke-width="1.8" stroke-linecap="butt" stroke-linejoin="miter"/></svg>
<svg class="abs" style="left:0px;top:160px;" width="20" height="30" viewBox="0 0 20 30"><path d="M-0.5 6.5L11.9 18L7.6 18.3L10 23.6L7.9 24.6L5.2 19.2L0.8 23.2Z" fill="#fff" stroke="#0a0a14" stroke-width="1.2" stroke-linejoin="round"/></svg>
<svg class="abs" style="left:189.9px;top:441.6px;" width="45.1" height="48.1" viewBox="0 0 45.1 48.1"><defs><filter id="sh1" x="-20%" y="-20%" width="140%" height="150%"><feDropShadow dx="0" dy="1.2" stdDeviation="0.8" flood-color="#000" flood-opacity="0.45"/></filter></defs>
<g filter="url(#sh1)" fill="#f03b3d"><circle cx="23.1" cy="22.0" r="18"/><polygon points="4.0,43.1 6.6,24.4 20.1,39.4"/></g>
<polygon style="filter:drop-shadow(0 1px 0.5px rgba(0,0,0,.5))" fill="#fff" points="25.5,13.3 25.5,30.8 22.1,30.8 22.1,17.8 17.3,19.6 17.3,16.4 22.5,13.3"/></svg>
<svg class="abs" style="left:144.2px;top:588.7px;" width="61.7" height="45.0" viewBox="0 0 61.7 45.0"><defs><filter id="sh2" x="-20%" y="-20%" width="140%" height="150%"><feDropShadow dx="0" dy="1.2" stdDeviation="0.8" flood-color="#000" flood-opacity="0.45"/></filter></defs>
<g filter="url(#sh2)" fill="#f03b3d"><circle cx="39.7" cy="22.0" r="18"/><polygon points="4.0,30.0 25.8,11.3 31.8,37.8"/></g>
<text x="39.0" y="30.1" font-family="Liberation Sans" font-weight="700" font-size="24" fill="#fff" text-anchor="middle" style="filter:drop-shadow(0 1px 0.5px rgba(0,0,0,.5))">2</text></svg>
<svg class="abs" style="left:1603.2px;top:103.8px;" width="76.6" height="45.0" viewBox="0 0 76.6 45.0"><defs><filter id="sh3" x="-20%" y="-20%" width="140%" height="150%"><feDropShadow dx="0" dy="1.2" stdDeviation="0.8" flood-color="#000" flood-opacity="0.45"/></filter></defs>
<g filter="url(#sh3)" fill="#f03b3d"><circle cx="22.0" cy="22.0" r="18"/><polygon points="72.6,37.9 34.8,9.2 24.8,39.9"/></g>
<text x="20.8" y="29.7" font-family="Liberation Sans" font-weight="700" font-size="24" fill="#fff" text-anchor="middle" style="filter:drop-shadow(0 1px 0.5px rgba(0,0,0,.5))">3</text></svg>
</body></html>
